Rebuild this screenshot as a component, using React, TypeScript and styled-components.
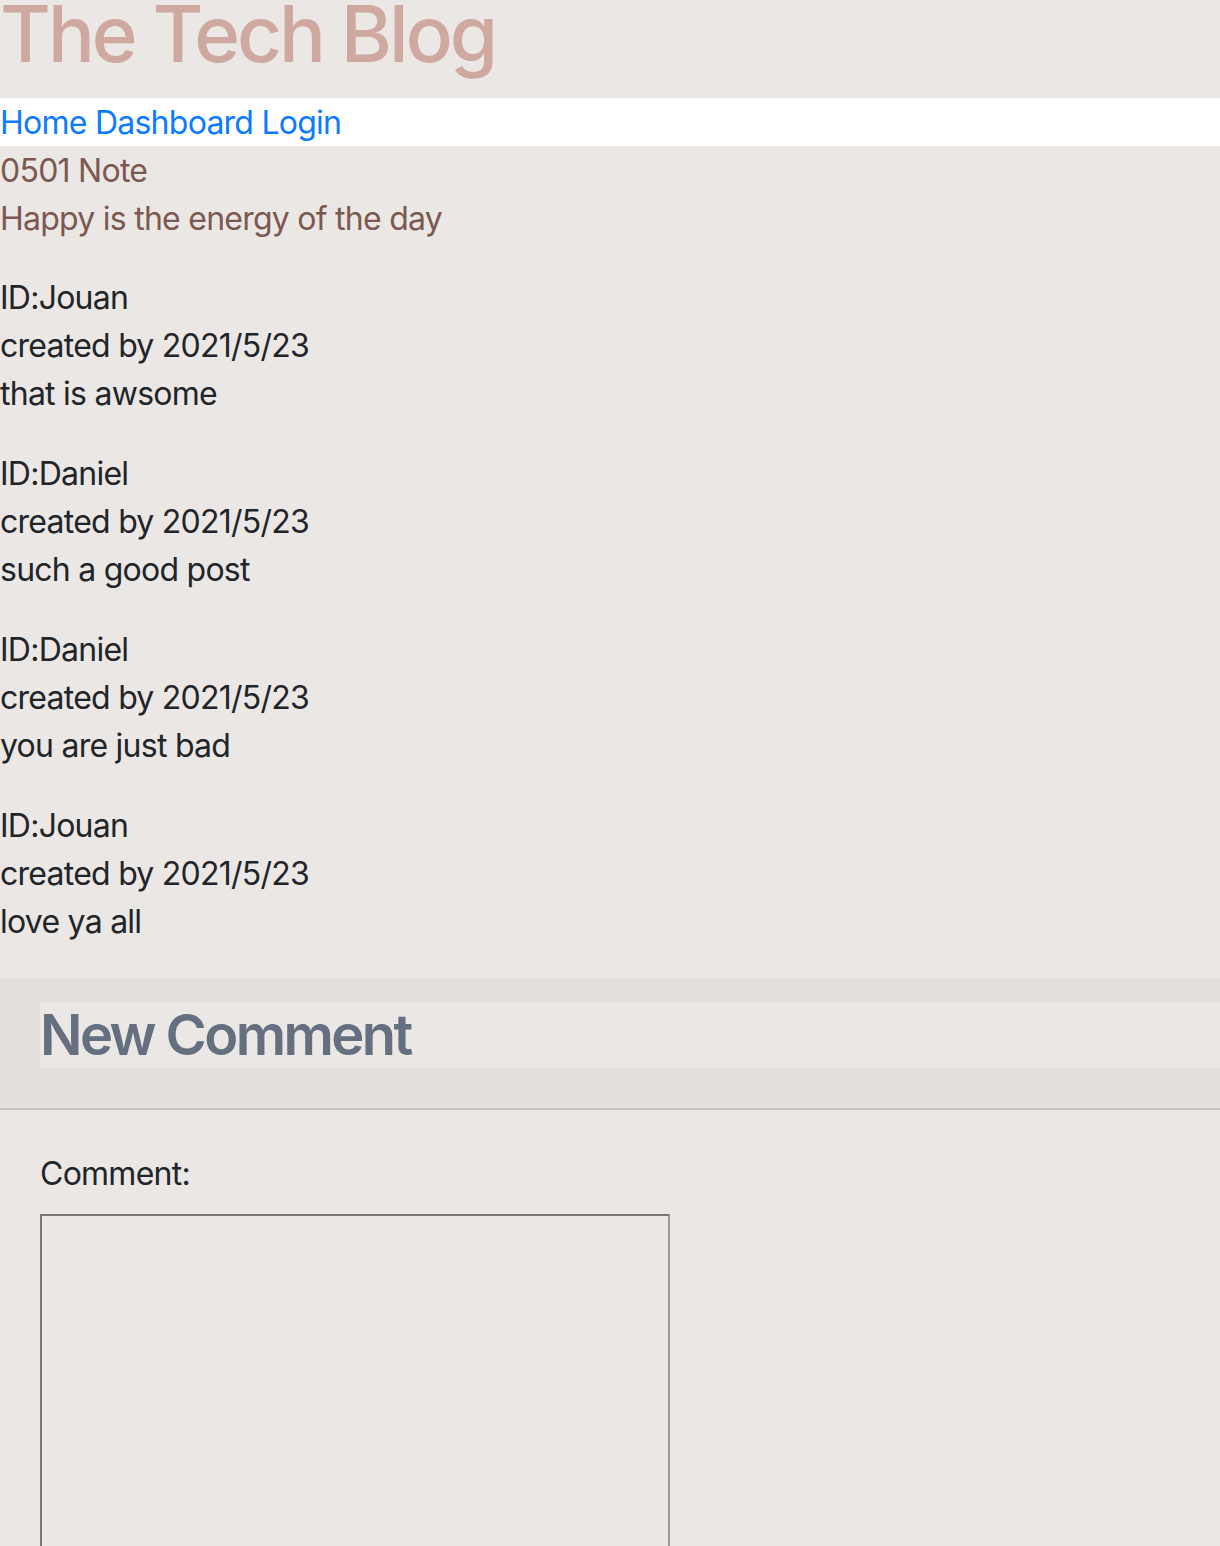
import React from "react";
import styled, { createGlobalStyle } from "styled-components";

const Global = createGlobalStyle`
  html, body {
    margin: 0;
    padding: 0;
    background: #ebe7e4;
  }
  body {
    font-family: Inter, "Noto Sans", "DejaVu Sans", sans-serif;
    font-size: 32px;
    line-height: 48px;
    letter-spacing: -0.75px;
    color: #212529;
  }
  * { box-sizing: border-box; }
`;

const Header = styled.header`
  height: 98px;
  background: #ebe7e4;
`;

const Title = styled.h1`
  margin: 0;
  font-size: 78px;
  line-height: 68px;
  font-weight: 500;
  color: #cfa8a0;
  letter-spacing: -3px;
`;

const Nav = styled.nav`
  background: #ffffff;
  height: 48px;
  padding-top: 1px;
`;

const NavLink = styled.a`
  color: #0d7bff;
  text-decoration: none;
`;

const Post = styled.section`
  color: #7b5950;
  padding-top: 1px;
  margin-bottom: 31px;
`;

const Line = styled.div`
  height: 48px;
  white-space: nowrap;
`;

const CommentBlock = styled.div`
  margin-bottom: 32px;
`;

const Card = styled.div`
  margin-top: 32px;
`;

const CardHeader = styled.div`
  background: rgba(0, 0, 0, 0.03);
  padding: 24px 0 24px 40px;
  border-bottom: 2px solid rgba(0, 0, 0, 0.125);
`;

const CardTitle = styled.h2`
  margin: 0 0 16px;
  background: #ebe7e4;
  color: #647080;
  font-size: 56px;
  line-height: 66px;
  font-weight: 600;
  letter-spacing: -2.6px;
`;

const CardBody = styled.div`
  padding: 40px 40px 40px;
`;

const Label = styled.label`
  display: block;
  margin-bottom: 16px;
`;

const TextArea = styled.textarea`
  display: block;
  width: 630px;
  height: 420px;
  background: transparent;
  border: 2px solid;
  border-color: #767676 #9a9a9a #9a9a9a #767676;
  resize: none;
  font: inherit;
`;

const comments = [
  { id: "Jouan", date: "2021/5/23", text: "that is awsome" },
  { id: "Daniel", date: "2021/5/23", text: "such a good post" },
  { id: "Daniel", date: "2021/5/23", text: "you are just bad" },
  { id: "Jouan", date: "2021/5/23", text: "love ya all" },
];

export default function App() {
  return (
    <>
      <Global />
      <Header>
        <Title>The Tech Blog</Title>
      </Header>
      <Nav>
        <NavLink href="#">Home</NavLink> <NavLink href="#">Dashboard</NavLink>{" "}
        <NavLink href="#">Login</NavLink>
      </Nav>
      <Post>
        <Line>0501 Note</Line>
        <Line>Happy is the energy of the day</Line>
      </Post>
      {comments.map((c, i) => (
        <CommentBlock key={i}>
          <Line>ID:{c.id}</Line>
          <Line>created by {c.date}</Line>
          <Line>{c.text}</Line>
        </CommentBlock>
      ))}
      <Card>
        <CardHeader>
          <CardTitle>New Comment</CardTitle>
        </CardHeader>
        <CardBody>
          <Label htmlFor="comment">Comment:</Label>
          <TextArea id="comment" />
        </CardBody>
      </Card>
    </>
  );
}
